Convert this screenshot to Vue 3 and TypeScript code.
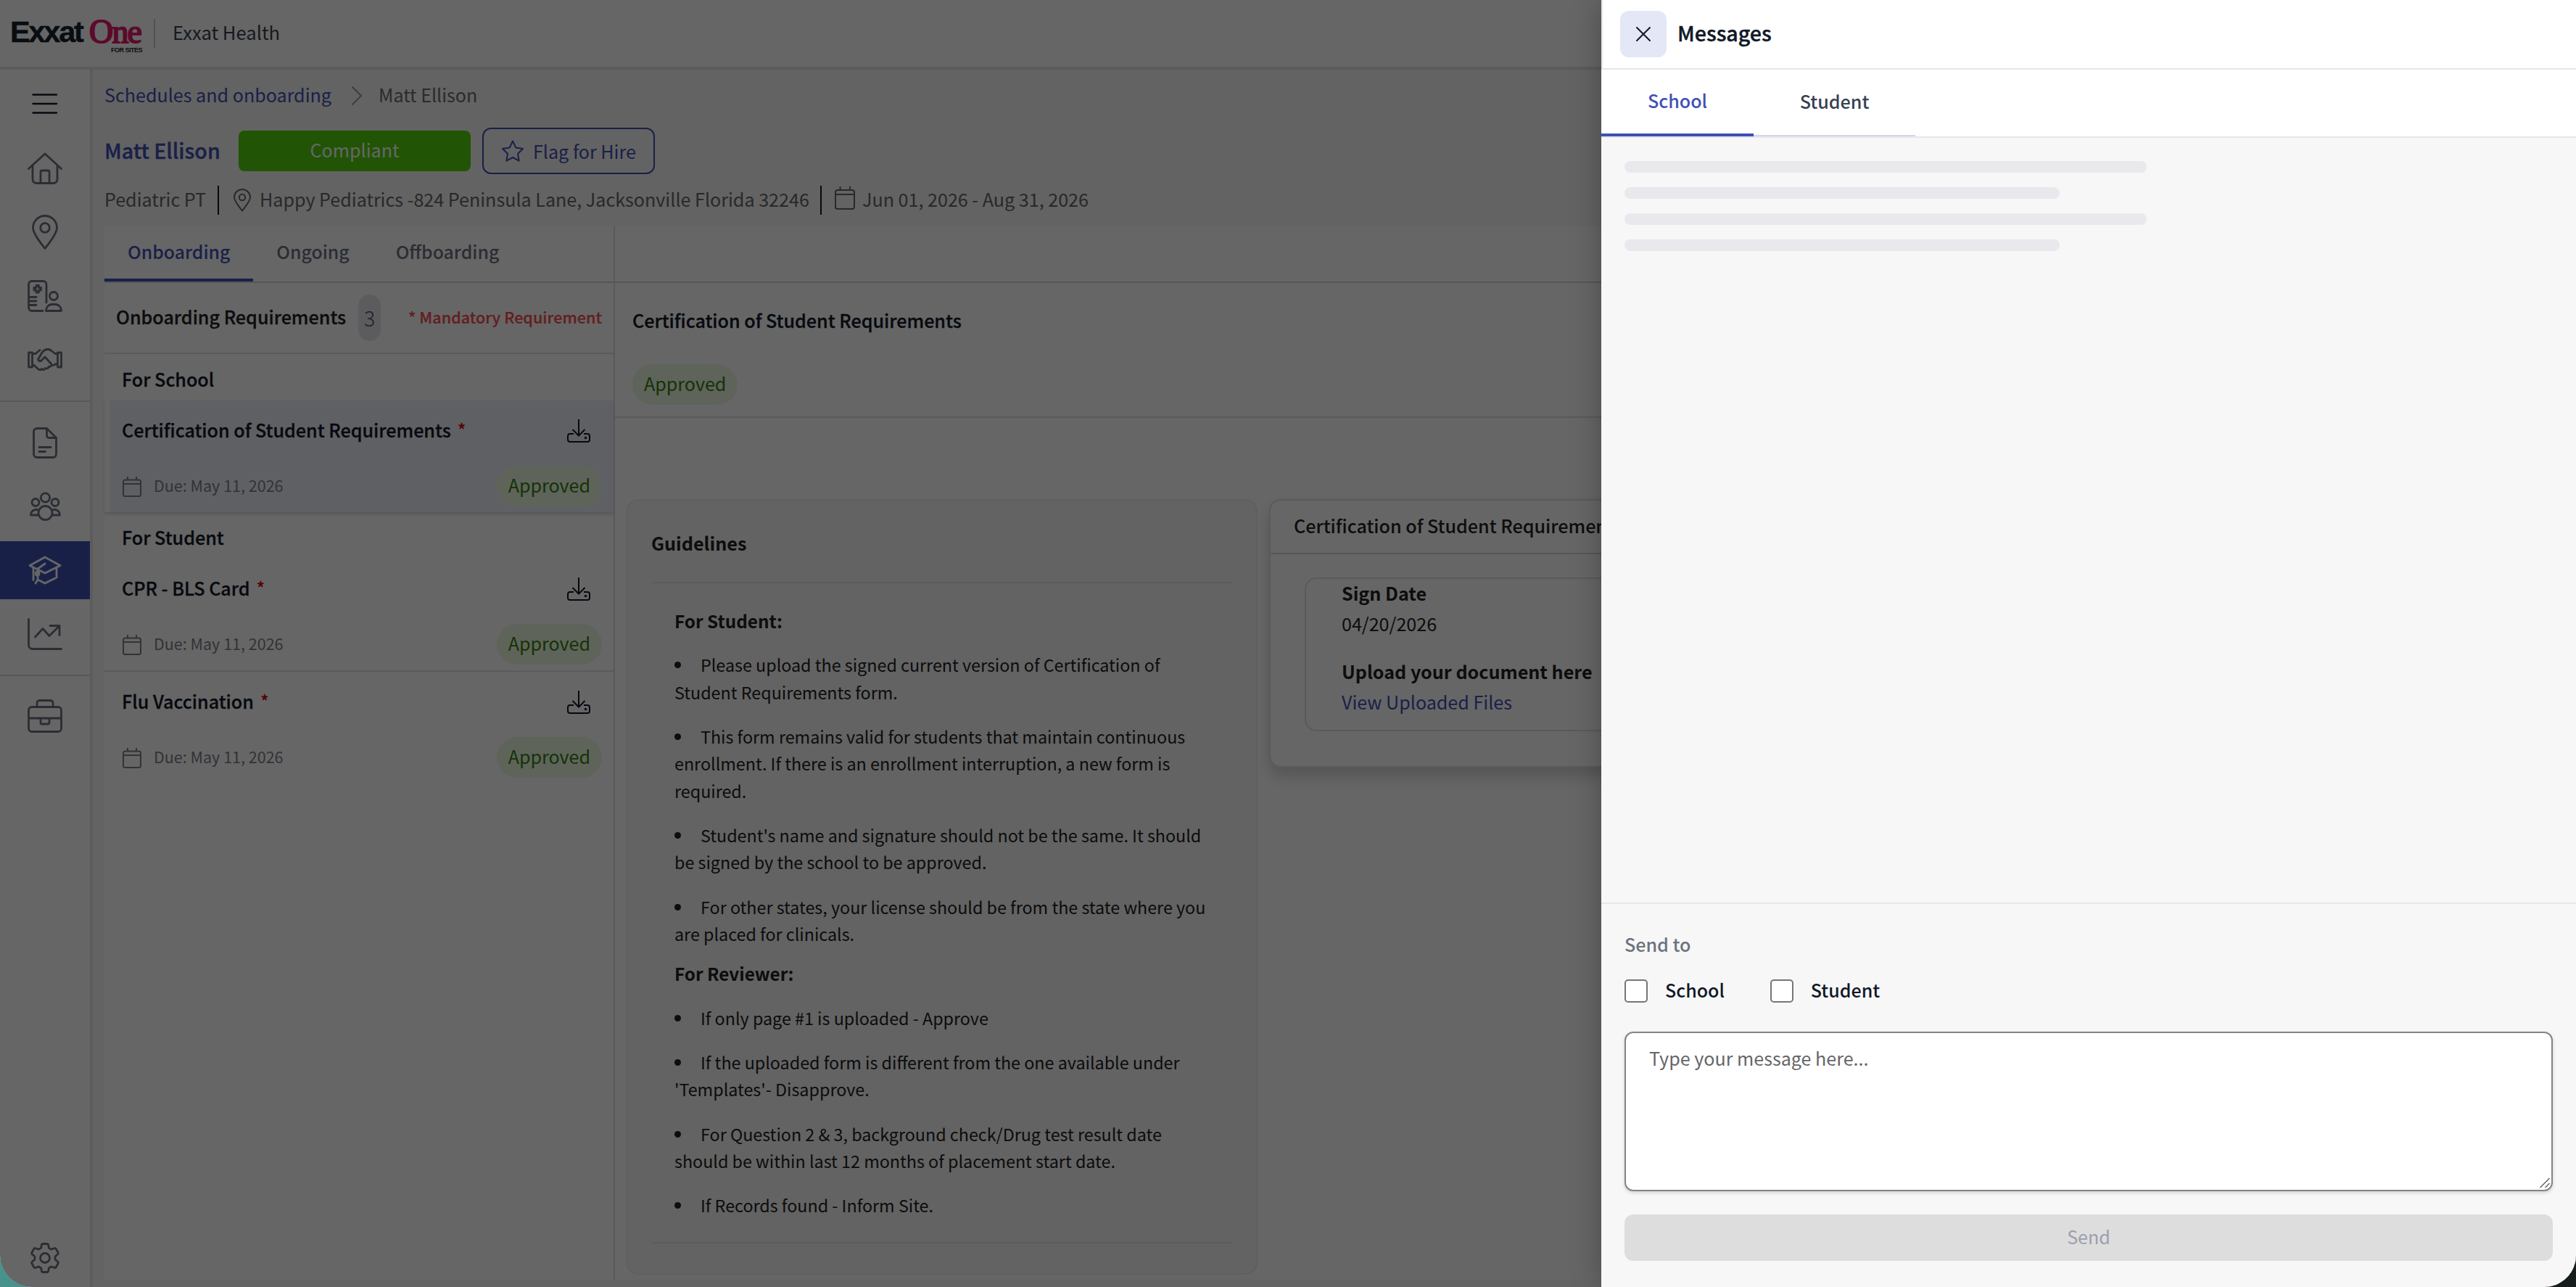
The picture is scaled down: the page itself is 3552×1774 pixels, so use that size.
<script setup lang="ts">
interface Requirement {
  title: string
  due: string
  status: string
  selected?: boolean
}
interface Group {
  label: string
  items: Requirement[]
}

const groups: Group[] = [
  {
    label: 'For School',
    items: [
      { title: 'Certification of Student Requirements', due: 'Due: May 11, 2026', status: 'Approved', selected: true },
    ],
  },
  {
    label: 'For Student',
    items: [
      { title: 'CPR - BLS Card', due: 'Due: May 11, 2026', status: 'Approved' },
      { title: 'Flu Vaccination', due: 'Due: May 11, 2026', status: 'Approved' },
    ],
  },
]

const studentRules: string[][] = [
  ['Please upload the signed current version of Certification of', 'Student Requirements form.'],
  ['This form remains valid for students that maintain continuous', 'enrollment. If there is an enrollment interruption, a new form is', 'required.'],
  ["Student's name and signature should not be the same. It should", 'be signed by the school to be approved.'],
  ['For other states, your license should be from the state where you', 'are placed for clinicals.'],
]

const reviewerRules: string[][] = [
  ['If only page #1 is uploaded - Approve'],
  ['If the uploaded form is different from the one available under', "'Templates'- Disapprove."],
  ['For Question 2 & 3, background check/Drug test result date', 'should be within last 12 months of placement start date.'],
  ['If Records found - Inform Site.'],
]

const skeleton: number[] = [720, 600, 720, 600]
</script>

<template>
  <div class="desktop">
    <div class="window">
      <div class="page">
        <header class="topbar">
          <div class="logo">
            <div class="logo-main"><span class="logo-exxat">Exxat</span><span class="logo-one">One</span></div>
            <div class="logo-sub">FOR SITES</div>
          </div>
          <div class="topbar-rule"></div>
          <div class="org">Exxat Health</div>
        </header>

        <div class="body">
          <nav class="sidebar">
            <div class="burger">
              <svg width="36" height="28" viewBox="0 0 36 28" stroke="currentColor" stroke-width="2.4" stroke-linecap="round"><path d="M1.500 1.500H34M1.500 14H34M1.500 26.500H34" /></svg>
            </div>
            <div class="nav-item">
              <svg class="ico" width="48" height="44" viewBox="0 0 48 44"><path d="M1.500 22.500 24 2 46.500 22.500M7 18V37a5.500 5.500 0 0 0 5.500 5.500H35.500A5.500 5.500 0 0 0 41 37V18M18 42.500V27a2 2 0 0 1 2-2H28a2 2 0 0 1 2 2V42.500" /></svg>
            </div>
            <div class="nav-item">
              <svg class="ico" width="36" height="48" viewBox="0 0 36 48"><path d="M18 46.500C12 39 1.500 26 1.500 18a16.500 16.500 0 0 1 33 0C34.500 26 24 39 18 46.500Z" /><circle cx="18" cy="18" r="6.300" /></svg>
            </div>
            <div class="nav-item">
              <svg class="ico" width="48" height="44" viewBox="0 0 48 44"><path d="M21 42.500H6A4.500 4.500 0 0 1 1.500 38V6A4.500 4.500 0 0 1 6 1.500H21.500A4.500 4.500 0 0 1 26 6V31M1.500 23.500H12M1.500 29H12M1.500 34.500H12M12 7.500h3.500v3h3v3.500h-3v3H12v-3H9v-3.500h3Z" /><circle cx="36" cy="22" r="5.500" /><path d="M25.500 42.500a8.500 8.500 0 0 1 8.500-9h4a8.500 8.500 0 0 1 8.500 9Z" /></svg>
            </div>
            <div class="nav-item">
              <svg class="ico" width="48" height="32" viewBox="0 0 48 32"><path d="M1.500 6H6.500V26H1.500ZM41.500 6h5V26h-5ZM6.500 7.500H11L17 2.500M6.500 23.500h2.500l6 5.500q3 2 4.500-.5 3.500 2.500 5-1 4 1.500 4.500-2 4 .5 4-3.500L24 12 19 17q-3 2-4.500-1.500L20 6q3-4.500 8-4.500 3 0 5 2L38 7.500h3.500M33 22.500q3 2.500 5-.5l3.500-.5" /></svg>
            </div>
            <div class="nav-rule"></div>
            <div class="nav-item">
              <svg class="ico" width="34" height="43" viewBox="0 0 34 43"><path d="M6 1.500H19.500L32.500 14.500V37a4.500 4.500 0 0 1-4.500 4.500H6A4.500 4.500 0 0 1 1.500 37V6A4.500 4.500 0 0 1 6 1.500ZM19.500 1.500V11.500a3 3 0 0 0 3 3H32.500M9 27.500H25M9 33.500H17.500" /></svg>
            </div>
            <div class="nav-item">
              <svg class="ico" width="43" height="40" viewBox="0 0 43 40"><circle cx="21.500" cy="8" r="6.200" /><circle cx="8" cy="14.500" r="5" /><circle cx="35" cy="14.500" r="5" /><circle cx="21.500" cy="29" r="9.500" /><path d="M10.500 24.500H8.500a7 7 0 0 0-7 7.500H11M32.500 24.500h2a7 7 0 0 1 7 7.500H32" /></svg>
            </div>
            <div class="nav-item active">
              <svg class="ico" width="46" height="40" viewBox="0 0 46 40"><path d="M23 2 44 13.500 23 24 2 13.500ZM7 17V33.500M13 19.500V33L10 38M13 33l10 5 16-8V17M23 11 13 18V27" /><circle cx="12.500" cy="24.500" r="2.500" /></svg>
            </div>
            <div class="nav-item">
              <svg class="ico" width="48" height="44" viewBox="0 0 48 44"><path d="M1.500 1.500V37a5.500 5.500 0 0 0 5.500 5.500H46.500M10.500 26 21 14.500l9 10L44 10.500M31 10.500H44V23.500" /></svg>
            </div>
            <div class="nav-rule"></div>
            <div class="nav-item case">
              <svg class="ico" width="48" height="46" viewBox="0 0 48 46"><path d="M6 10.500H42A4.500 4.500 0 0 1 46.500 15V40a4.500 4.500 0 0 1-4.500 4.500H6A4.500 4.500 0 0 1 1.500 40V15A4.500 4.500 0 0 1 6 10.500ZM13 10.500V5A3.500 3.500 0 0 1 16.500 1.500H31.500A3.500 3.500 0 0 1 35 5V10.500M1.500 26H46.500M18 26v6a2 2 0 0 0 2 2h8a2 2 0 0 0 2-2V26" /></svg>
            </div>
            <div class="nav-item gear">
              <svg class="ico" width="40" height="42" viewBox="0 0 40 42"><path d="M15.500 2.500Q16 1.500 17 1.500H23Q24 1.500 24.500 2.500L25.500 7.500Q27 8 28.500 9.200L33.500 7.500Q34.500 7.500 35 8L38.200 13.800Q38.500 14.800 38 15.500L34 19Q34.200 21 34 23L38 26.500Q38.500 27.200 38.200 28.200L35 34Q34.500 34.500 33.500 34.500L28.500 32.800Q27 34 25.500 34.500L24.500 39.500Q24 40.500 23 40.500H17Q16 40.500 15.500 39.500L14.500 34.500Q13 34 11.500 32.800L6.500 34.500Q5.500 34.500 5 34L1.800 28.200Q1.500 27.200 2 26.500L6 23Q5.800 21 6 19L2 15.500Q1.500 14.800 1.800 13.800L5 8Q5.500 7.500 6.500 7.500L11.500 9.200Q13 8 14.500 7.500Z" /><circle cx="20" cy="21" r="6.500" /></svg>
            </div>
          </nav>

          <main class="main">
            <div class="crumbs">
              <span class="link crumb-link">Schedules and onboarding</span>
              <svg class="chev" width="16" height="28" viewBox="0 0 16 28" fill="none" stroke="currentColor" stroke-width="2"><path d="M1.500 1.500 14 14 1.500 26.500" /></svg>
              <span>Matt Ellison</span>
            </div>

            <div class="title-row">
              <div class="name">Matt Ellison</div>
              <div class="compliant">Compliant</div>
              <div class="flag">
                <svg width="32" height="30" viewBox="0 0 32 30" fill="none" stroke="currentColor" stroke-width="2" stroke-linejoin="round"><path d="M16 1.500 20.300 10.500 30 12 23 19 24.600 28.700 16 24 7.400 28.700 9 19 2 12 11.700 10.500Z" /></svg>
                <span>Flag for Hire</span>
              </div>
            </div>

            <div class="info">
              <span class="info-text pt">Pediatric PT</span>
              <i class="bar"></i>
              <svg class="pin" width="26" height="32" viewBox="0 0 26 32"><path d="M13 30.500C9 25.500 2 17 2 12a11 11 0 0 1 22 0C24 17 17 25.500 13 30.500Z" /><circle cx="13" cy="12" r="4.200" /></svg>
              <span class="info-text addr">Happy Pediatrics -824 Peninsula Lane, Jacksonville Florida 32246</span>
              <i class="bar"></i>
              <svg class="cal" width="28" height="32" viewBox="0 0 28 32"><path d="M4 5H24A3 3 0 0 1 27 8V28A3 3 0 0 1 24 31H4A3 3 0 0 1 1 28V8A3 3 0 0 1 4 5ZM1 11H27M7.500 0V5M21 0V5" /></svg>
              <span class="info-text dates">Jun 01, 2026 - Aug 31, 2026</span>
            </div>

            <div class="card">
              <section class="list">
                <div class="tabs">
                  <div class="tab on">Onboarding</div>
                  <div class="tab">Ongoing</div>
                  <div class="tab">Offboarding</div>
                </div>
                <div class="list-head">
                  <span class="list-title">Onboarding Requirements</span>
                  <span class="count">3</span>
                  <span class="mandatory">* Mandatory Requirement</span>
                </div>
                <div v-for="group in groups" :key="group.label" class="group">
                  <div class="group-label">{{ group.label }}</div>
                  <div v-for="item in group.items" :key="item.title" class="req" :class="{ selected: item.selected }">
                    <div class="req-top">
                      <span class="req-title">{{ item.title }}</span><span class="star">*</span>
                      <svg class="download" width="34" height="34" viewBox="0 0 34 34"><path d="M17 1V23M8.500 15 17 23.500 25.500 15M10 21H5A3 3 0 0 0 2 24V29A3 3 0 0 0 5 32H29A3 3 0 0 0 32 29V24A3 3 0 0 0 29 21H24" /><circle cx="26.500" cy="26.500" r=".8" /></svg>
                    </div>
                    <div class="req-meta">
                      <svg class="cal small" width="26" height="28" viewBox="0 0 26 28"><path d="M3.500 4.500H22.500A2.500 2.500 0 0 1 25 7V24.500A2.500 2.500 0 0 1 22.500 27H3.500A2.500 2.500 0 0 1 1 24.500V7A2.500 2.500 0 0 1 3.500 4.500ZM1 10H25M7 0V4.500M19 0V4.500" /></svg>
                      <span class="due">{{ item.due }}</span>
                      <span class="pill">{{ item.status }}</span>
                    </div>
                  </div>
                </div>
              </section>

              <section class="detail">
                <div class="detail-strip"></div>
                <div class="detail-head">
                  <div class="detail-title">Certification of Student Requirements</div>
                  <span class="pill">Approved</span>
                </div>
                <div class="panels">
                  <article class="guide">
                    <h3>Guidelines</h3>
                    <div class="guide-body">
                      <p class="lead">For Student:</p>
                      <p v-for="(lines, i) in studentRules" :key="'s' + i">
                        <i class="dot"></i><template v-for="(line, j) in lines" :key="j"><br v-if="j > 0">{{ line }}</template>
                      </p>
                      <p class="lead second">For Reviewer:</p>
                      <p v-for="(lines, i) in reviewerRules" :key="'r' + i">
                        <i class="dot"></i><template v-for="(line, j) in lines" :key="j"><br v-if="j > 0">{{ line }}</template>
                      </p>
                    </div>
                  </article>
                  <article class="form">
                    <div class="form-head">Certification of Student Requirements</div>
                    <div class="form-box">
                      <div class="label">Sign Date</div>
                      <div class="value">04/20/2026</div>
                      <div class="label upload">Upload your document here</div>
                      <div class="value link">View Uploaded Files</div>
                    </div>
                  </article>
                </div>
              </section>
            </div>
          </main>
        </div>
      </div>

      <div class="scrim"></div>

      <aside class="drawer">
        <div class="drawer-head">
          <div class="close">
            <svg width="22" height="22" viewBox="0 0 22 22" fill="none" stroke="currentColor" stroke-width="2" stroke-linecap="round"><path d="M2 2 20 20M20 2 2 20" /></svg>
          </div>
          <div class="drawer-title">Messages</div>
        </div>
        <div class="drawer-tabs">
          <div class="dtab on">School</div>
          <div class="dtab student">Student</div>
        </div>
        <div class="messages">
          <div v-for="(w, i) in skeleton" :key="i" class="bone" :style="{ width: w + 'px' }"></div>
        </div>
        <div class="composer">
          <div class="send-to">Send to</div>
          <div class="checks">
            <div class="check"><i class="box"></i><span>School</span></div>
            <div class="check"><i class="box"></i><span>Student</span></div>
          </div>
          <div class="textarea">
            <span>Type your message here...</span>
            <svg class="grip" width="14" height="15" viewBox="0 0 14 15" fill="none" stroke="#666" stroke-width="1.500"><path d="M.5 14 13.500 1M7.500 14 13.500 8" /></svg>
          </div>
          <div class="send">Send</div>
        </div>
      </aside>
    </div>
  </div>
</template>

<style>
html,
body {
  margin: 0;
  overflow: hidden;
}
</style>

<style scoped>
.desktop,
.desktop * {
  box-sizing: border-box;
}
.desktop {
  width: 3552px;
  height: 1774px;
  background: linear-gradient(90deg, #48928c 0 50%, #171c1c 50%);
  font-family: "Noto Sans CJK SC", "Noto Sans", sans-serif;
  font-size: 25.1px;
  color: #111827;
  white-space: nowrap;
}
.window {
  position: relative;
  width: 3552px;
  height: 1774px;
  overflow: hidden;
  border-radius: 0 0 44px 44px;
  background: #fff;
}
.page {
  display: flex;
  flex-direction: column;
  height: 1774px;
}
.link {
  color: #3f51b5;
}

/* top bar */
.topbar {
  display: flex;
  height: 96px;
  flex: none;
  border-bottom: 4px solid #e2e3ea;
  padding-left: 14px;
}
.logo {
  width: 182px;
  padding-top: 22px;
}
.logo-main {
  display: flex;
  height: 42px;
  line-height: 44px;
}
.logo-exxat {
  width: 109px;
  font-family: "Liberation Sans", sans-serif;
  font-weight: 700;
  font-size: 41.500px;
  letter-spacing: -2.2px;
  color: #16212e;
  -webkit-text-stroke: 0.5px #16212e;
}
.logo-one {
  font-family: "Liberation Serif", serif;
  font-size: 46px;
  letter-spacing: -1.800px;
  color: #e31b6d;
  -webkit-text-stroke: 2px #e31b6d;
}
.logo-sub {
  text-align: right;
  font-family: "Liberation Sans", sans-serif;
  font-weight: 700;
  font-size: 9px;
  line-height: 10px;
  letter-spacing: -0.5px;
  color: #222;
}
.topbar-rule {
  width: 2px;
  height: 40px;
  margin: 26px 24px 0 16px;
  background: #c9ccd2;
}
.org {
  line-height: 88px;
  font-size: 25.6px;
  color: #374151;
}

/* side navigation */
.body {
  display: flex;
  flex: 1;
}
.sidebar {
  display: flex;
  flex-direction: column;
  width: 128px;
  border-right: 4px solid #e6e7ea;
}
.burger {
  display: flex;
  align-items: center;
  justify-content: center;
  height: 93px;
  margin-bottom: 3px;
}
.nav-item {
  display: flex;
  align-items: center;
  justify-content: center;
  height: 80px;
  color: #6b7280;
}
.nav-item + .nav-item {
  margin-top: 8px;
}
.nav-rule {
  height: 2px;
  margin: 16px 0;
  background: #dcdde0;
}
.nav-item.active {
  background: #3f51b5;
  color: #fff;
}
.nav-item.case {
  padding-bottom: 3px;
}
.nav-item.gear {
  margin-top: auto;
}
.ico {
  fill: none;
  stroke: currentColor;
  stroke-width: 2.8;
  stroke-linecap: round;
  stroke-linejoin: round;
}

/* page heading */
.main {
  flex: 1;
  background: #f7f7f7;
  padding-left: 16px;
}
.crumbs {
  display: flex;
  align-items: center;
  height: 68px;
  color: #6b6b6b;
}
.chev {
  margin: 4px 22px 0 27px;
  color: #999;
}
.title-row {
  display: flex;
  align-items: center;
  height: 64px;
  margin-top: 12px;
}
.name {
  width: 185px;
  padding-bottom: 4px;
  font-size: 28.600px;
  font-weight: 500;
  color: #3f51b5;
  -webkit-text-stroke: 0.4px #3f51b5;
}
.compliant {
  width: 320px;
  height: 56px;
  border-radius: 8px;
  background: #53d20d;
  color: #fff;
  text-align: center;
  line-height: 53px;
}
.flag {
  display: flex;
  align-items: center;
  width: 238px;
  height: 64px;
  margin-left: 16px;
  padding-left: 24px;
  border: 2px solid #3f51b5;
  border-radius: 12px;
  color: #3f51b5;
  line-height: 58px;
}
.flag svg {
  margin-right: 12px;
}
.info {
  display: flex;
  align-items: center;
  height: 40px;
  margin: 16px 0;
  color: #666;
}
.info-text {
  padding-bottom: 4px;
}
.pt {
  width: 156px;
}
.addr {
  width: 773px;
}
.bar {
  width: 2px;
  height: 40px;
  background: #111827;
}
.pin,
.cal {
  fill: none;
  stroke: currentColor;
  stroke-width: 2;
}
.pin {
  margin: 0 11px 0 19px;
}
.cal {
  margin: -6px 10px 0 18px;
}

/* requirement list */
.card {
  display: flex;
  height: 1452px;
  background: #fff;
}
.list {
  width: 704px;
  border-right: 2px solid #dedfe3;
}
.tabs {
  display: flex;
  height: 78px;
  border-bottom: 2px solid #d5d7e3;
}
.tab {
  height: 76px;
  padding: 0 32px;
  font-size: 24.800px;
  line-height: 68px;
  font-weight: 500;
  color: #6b7280;
}
.tab.on {
  border-bottom: 4px solid #3f51b5;
  color: #3f51b5;
}
.list-head {
  display: flex;
  align-items: center;
  height: 98px;
  padding: 0 16px;
  border-bottom: 2px solid #e0e0e0;
}
.list-title {
  padding-bottom: 4px;
  font-weight: 500;
  color: #212121;
  -webkit-text-stroke: 0.3px #212121;
}
.count {
  width: 31px;
  height: 64px;
  margin-left: 17px;
  border-radius: 16px;
  background: #e5e7eb;
  color: #4b5563;
  font-size: 29px;
  font-weight: 300;
  line-height: 62px;
  text-align: center;
}
.mandatory {
  margin-left: auto;
  padding-bottom: 4px;
  font-size: 21.600px;
  font-weight: 500;
  color: #f84c50;
  -webkit-text-stroke: 0.2px #f84c50;
}
.group-label {
  height: 62px;
  padding-left: 24px;
  font-weight: 500;
  line-height: 64px;
}
.group:nth-child(3) .group-label {
  height: 64px;
  line-height: 68px;
}
.req {
  height: 156px;
  border-bottom: 2px solid #e0e0e0;
}
.group:last-child .req:last-child {
  border-bottom-color: transparent;
}
.req.selected {
  background: linear-gradient(90deg, #fff 8px, #eef1fb 8px);
  border-bottom-color: #dfe0e6;
  box-shadow: 0 2px 4px rgba(0, 0, 0, 0.1);
}
.req-top {
  display: flex;
  align-items: center;
  height: 80px;
  padding: 0 31px 0 24px;
}
.req-title,
.group-label,
.detail-title {
  font-weight: 500;
  -webkit-text-stroke: 0.3px #111827;
}
.star {
  margin-left: 9px;
  color: #d00000;
  -webkit-text-stroke: 0.3px #d00000;
}
.download {
  margin: 4px 0 0 auto;
  fill: none;
  stroke: currentColor;
  stroke-width: 2;
}
.req-meta {
  display: flex;
  align-items: center;
  height: 56px;
  margin-top: 10px;
  padding: 0 16px 0 25px;
}
.cal.small {
  margin: 1px 17px 0 0;
  color: #7b7f89;
}
.due {
  padding-bottom: 4px;
  font-size: 21.500px;
  color: #7b7f89;
}
.pill {
  display: inline-block;
  height: 56px;
  padding: 0 16px;
  border-radius: 28px;
  background: #ebf9e0;
  color: #35800f;
  line-height: 52px;
}
.req-meta .pill {
  margin-left: auto;
}

/* requirement detail */
.detail {
  flex: 1;
}
.detail-strip {
  height: 78px;
  border-bottom: 2px solid #d5d7e3;
}
.detail-head {
  height: 186px;
  padding-left: 24px;
  border-bottom: 2px solid #e0e0e0;
}
.detail-title {
  height: 112px;
  line-height: 103px;
}
.panels {
  display: flex;
  align-items: flex-start;
  gap: 16px;
  padding: 112px 16px 0;
}
.guide {
  width: 870px;
  height: 1069px;
  padding: 0 33px 0 32px;
  border: 2px solid #eeeeee;
  border-radius: 16px;
  background: #f7f7f7;
  color: #212121;
}
.guide h3 {
  height: 114px;
  margin: 0;
  padding-top: 4px;
  border-bottom: 2px solid #e6e6e6;
  font-size: 25.2px;
  font-weight: 600;
  line-height: 108px;
}
.guide-body {
  height: 910px;
  padding: 33px 0 0 32px;
  border-bottom: 2px solid #e6e6e6;
  font-size: 23.300px;
  line-height: 37.33px;
}
.guide-body p {
  margin: 0 0 24px;
}
.guide-body .lead {
  font-size: 24.300px;
  font-weight: 600;
}
.guide-body .second {
  margin-top: -7px;
}
.dot {
  display: inline-block;
  width: 9px;
  height: 9px;
  margin: 0 27px 5px 0;
  border-radius: 50%;
  background: #212121;
}
.form {
  flex: 1;
  height: 370px;
  border: 2px solid #e0e0e0;
  border-radius: 16px;
  box-shadow: 0 12px 20px rgba(0, 0, 0, 0.17);
}
.form-head {
  height: 74px;
  padding-left: 32px;
  border-bottom: 2px solid #d5d7e3;
  color: #212121;
  font-weight: 500;
  line-height: 69px;
}
.form-box {
  height: 212px;
  margin: 32px 47px 0;
  padding: 0 0 0 49px;
  border: 2px solid #e0e0e0;
  border-radius: 16px;
  color: #212121;
  line-height: 42px;
}
.label {
  font-weight: 700;
}
.label:first-child {
  margin-top: -2px;
}
.label.upload {
  margin-top: 24px;
}

/* messages drawer */
.scrim {
  position: absolute;
  inset: 0;
  background: rgba(0, 0, 0, 0.6);
}
.drawer {
  position: absolute;
  top: 0;
  right: 0;
  display: flex;
  flex-direction: column;
  width: 1344px;
  height: 1774px;
  background: #f7f7f7;
  box-shadow: 0 0 40px rgba(0, 0, 0, 0.28);
}
.drawer-head {
  display: flex;
  height: 96px;
  padding: 15px 0 0 24px;
  border-left: 2px solid #e5e7eb;
  border-bottom: 2px solid #e5e6ee;
  background: #fff;
}
.close {
  display: flex;
  align-items: center;
  justify-content: center;
  width: 64px;
  height: 64px;
  border-radius: 12px;
  background: #e3e7f6;
}
.drawer-title {
  margin-left: 15px;
  font-size: 28.600px;
  font-weight: 500;
  line-height: 60px;
  -webkit-text-stroke: 0.4px #111827;
}
.drawer-tabs {
  display: flex;
  height: 94px;
  border-bottom: 2px solid #e5e6ee;
  background: #fff;
}
.dtab {
  width: 210px;
  height: 92px;
  border-bottom: 4px solid #3f51b5;
  color: #3f51b5;
  font-weight: 500;
  line-height: 84px;
  text-align: center;
}
.dtab.student {
  width: 223px;
  border-bottom: 2px solid #d3d6e4;
  color: #374151;
  line-height: 86px;
}
.messages {
  display: flex;
  flex: 1;
  flex-direction: column;
  gap: 20px;
  padding: 32px;
}
.bone {
  height: 16px;
  border-radius: 8px;
  background: #e9e9ed;
}
.composer {
  height: 530px;
  padding: 0 32px;
  border-top: 2px solid #e5e6ee;
}
.send-to {
  height: 104px;
  color: #6b7280;
  font-weight: 500;
  line-height: 110px;
}
.checks {
  display: flex;
  height: 72px;
}
.check {
  display: flex;
  align-items: flex-start;
  font-weight: 500;
  font-size: 25px;
  line-height: 29px;
}
.check + .check {
  margin-left: 63px;
}
.box {
  width: 32px;
  height: 32px;
  margin-right: 24px;
  border: 2px solid #767676;
  border-radius: 5px;
  background: #fff;
}
.textarea {
  position: relative;
  height: 220px;
  padding-left: 32px;
  border: 2px solid #858585;
  border-radius: 12px;
  background: #fff;
  box-shadow: 0 2px 5px rgba(0, 0, 0, 0.16);
  color: #666;
  line-height: 69px;
}
.grip {
  position: absolute;
  right: 2px;
  bottom: 2px;
}
.send {
  height: 64px;
  margin-top: 32px;
  border-radius: 12px;
  background: #dddddd;
  color: #9b9fae;
  line-height: 61px;
  text-align: center;
}
</style>
